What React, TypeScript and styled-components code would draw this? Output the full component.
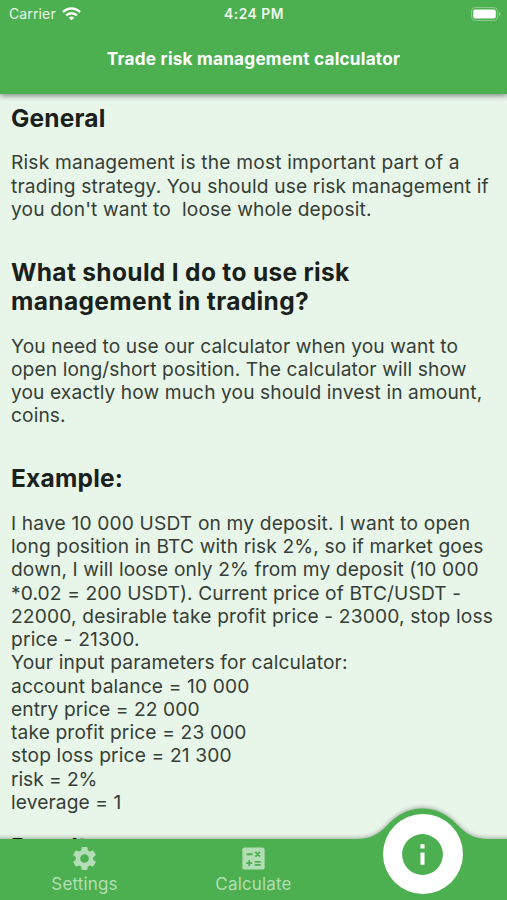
import React from "react";
import styled, { createGlobalStyle } from "styled-components";

const GREEN = "#4caf50";
const TINT = "#b3deb5";

const GlobalStyle = createGlobalStyle`
  * { box-sizing: border-box; }
  body { margin: 0; background: #e8f5e9; }
`;

const Screen = styled.div`
  width: 507px;
  height: 900px;
  overflow: hidden;
  display: flex;
  flex-direction: column;
  background: #e8f5e9;
  font-family: Inter, sans-serif;
`;

const Header = styled.header`
  position: relative;
  z-index: 1;
  flex: none;
  height: 94px;
  background: ${GREEN};
  color: #fff;
  box-shadow: 0 2px 5px rgba(0, 0, 0, 0.42);
`;

const StatusBar = styled.div`
  height: 27px;
  display: grid;
  grid-template-columns: 1fr auto 1fr;
  align-items: center;
  padding: 1px 6px 0 9px;
  font-size: 14px;
  line-height: 20px;
`;

const Carrier = styled.div`
  display: flex;
  align-items: center;
  gap: 6px;
  color: #e9f6e9;
  letter-spacing: 0.13px;
`;

const Clock = styled.div`
  font-weight: 600;
  font-size: 13.8px;
  color: #eff9ef;
  letter-spacing: 0.5px;
  margin-right: 2px;
`;

const BatterySlot = styled.div`
  display: flex;
  justify-content: flex-end;
`;

const Title = styled.h1`
  margin: 0;
  padding-top: 20px;
  text-align: center;
  font-size: 17.2px;
  line-height: 24px;
  font-weight: 700;
  letter-spacing: 0.22px;
`;

const Content = styled.main`
  flex: 1;
  min-height: 0;
  overflow: hidden;
  padding: 9.5px 11px 0;
`;

const Section = styled.section<{ $gap: number }>`
  margin-bottom: ${(p) => p.$gap}px;
`;

const Heading = styled.h2`
  margin: 0 0 18.5px;
  font-size: 24.5px;
  line-height: 29.3px;
  font-weight: 650;
  color: #1a211a;
  white-space: pre;
`;

const Text = styled.p`
  margin: 0;
  font-size: 19.2px;
  line-height: 23.25px;
  color: #363e37;
  white-space: pre;
`;

const Line = styled.span<{ $spacing: number }>`
  display: block;
  width: max-content;
  letter-spacing: ${(p) => p.$spacing}px;
`;

const NavBar = styled.nav`
  position: relative;
  z-index: 1;
  flex: none;
  height: 61px;
  display: grid;
  grid-template-columns: repeat(3, 1fr);
`;

const NavShape = styled.svg`
  position: absolute;
  left: 0;
  bottom: 0;
  overflow: visible;
  filter: drop-shadow(0 -1px 2px rgba(0, 0, 0, 0.3));
`;

const NavItem = styled.div`
  position: relative;
  display: flex;
  flex-direction: column;
  align-items: center;
  padding-top: 5px;
  color: ${TINT};
  font-size: 17px;
  line-height: 22px;
  letter-spacing: 0.16px;
`;

const ActiveButton = styled.div`
  position: absolute;
  left: 44.5px;
  top: -25px;
  width: 80px;
  height: 80px;
  border-radius: 50%;
  background: #fff;
  display: flex;
  align-items: center;
  justify-content: center;
`;

type Row = [text: string, spacing: number];

const sections: { title: Row[]; lines: Row[]; gap: number }[] = [
  {
    title: [["General", 0.17]],
    gap: 36.5,
    lines: [
      ["Risk management is the most important part of a", 0.18],
      ["trading strategy. You should use risk management if", 0.13],
      ["you don't want to  loose whole deposit.", 0.13],
    ],
  },
  {
    title: [
      ["What should I do to use risk", 0.33],
      ["management in trading?", 0.36],
    ],
    gap: 36.5,
    lines: [
      ["You need to use our calculator when you want to", 0.1],
      ["open long/short position. The calculator will show", 0.1],
      ["you exactly how much you should invest in amount,", 0.085],
      ["coins.", 0.1],
    ],
  },
  {
    title: [["Example:", 0.22]],
    gap: 19.2,
    lines: [
      ["I have 10 000 USDT on my deposit. I want to open", 0.15],
      ["long position in BTC with risk 2%, so if market goes", 0.13],
      ["down, I will loose only 2% from my deposit (10 000", 0.11],
      ["*0.02 = 200 USDT). Current price of BTC/USDT -", 0.11],
      ["22000, desirable take profit price - 23000, stop loss", 0.16],
      ["price - 21300.", 0.18],
      ["Your input parameters for calculator:", 0.13],
      ["account balance = 10 000", 0.13],
      ["entry price = 22 000", 0.07],
      ["take profit price = 23 000", 0.13],
      ["stop loss price = 21 300", 0.15],
      ["risk = 2%", -0.05],
      ["leverage = 1", 0.1],
    ],
  },
  { title: [["Result:", 0.2]], gap: 0, lines: [] },
];

const WifiIcon = () => (
  <svg width="19" height="14" viewBox="0 0 19 14" fill="none" stroke="#fff" strokeWidth="2.5">
    <path d="M1 5.2C5.8.4 13.2.4 18 5.2" />
    <path d="M4.1 8.3c3.1-2.9 7.7-2.9 10.8 0" />
    <path d="M6.7 10.5c1.7-1.4 3.9-1.4 5.6 0L9.5 13.4z" fill="#fff" stroke="none" />
  </svg>
);

const BatteryIcon = () => (
  <svg width="30" height="14" viewBox="0 0 30 14">
    <rect x=".5" y=".5" width="26" height="13" rx="3.8" fill="none" stroke="#fff" strokeOpacity=".35" />
    <rect x="2.2" y="2.4" width="22.6" height="9.2" rx="2" fill="#fff" />
    <path d="M28 4.8c1.7.7 1.7 3.7 0 4.4z" fill="#fff" fillOpacity=".5" />
  </svg>
);

const GearIcon = () => (
  <svg width="29" height="29" viewBox="0 0 24 24" fill="currentColor">
    <path d="M19.14 12.94c.04-.3.06-.61.06-.94 0-.32-.02-.64-.07-.94l2.03-1.58c.18-.14.23-.41.12-.61l-1.92-3.32c-.12-.22-.37-.29-.59-.22l-2.39.96c-.5-.38-1.03-.7-1.62-.94l-.36-2.54c-.04-.24-.24-.41-.48-.41h-3.84c-.24 0-.43.17-.47.41l-.36 2.54c-.59.24-1.13.57-1.62.94l-2.39-.96c-.22-.08-.47 0-.59.22L2.74 8.87c-.12.21-.08.47.12.61l2.03 1.58c-.05.3-.09.63-.09.94s.02.64.07.94l-2.03 1.58c-.18.14-.23.41-.12.61l1.92 3.32c.12.22.37.29.59.22l2.39-.96c.5.38 1.03.7 1.62.94l.36 2.54c.05.24.24.41.48.41h3.84c.24 0 .44-.17.47-.41l.36-2.54c.59-.24 1.13-.56 1.62-.94l2.39.96c.22.08.47 0 .59-.22l1.92-3.32c.12-.22.07-.47-.12-.61l-2.01-1.58zM12 15.6A3.6 3.6 0 1 1 12 8.4a3.6 3.6 0 0 1 0 7.2z" />
  </svg>
);

const CalculateIcon = () => (
  <svg width="29" height="29" viewBox="0 0 24 24">
    <rect x="2.8" y="2.8" width="18.4" height="18.4" rx="1.6" fill="currentColor" />
    <g stroke={GREEN} strokeWidth="1.5" fill="none">
      <path d="M6.25 8.47h5M13.5 6.55l3.9 3.9M17.4 6.55l-3.9 3.9M6 15.75h5M8.5 13.25v5M13 14.75h5M13 17.25h5" />
    </g>
  </svg>
);

const InfoIcon = () => (
  <svg width="49" height="49" viewBox="0 0 24 24">
    <circle cx="12" cy="12" r="10" fill={GREEN} />
    <path d="M11 7h2v2h-2zM11 11h2v6h-2z" fill="#fff" />
  </svg>
);

const Lines = ({ rows }: { rows: Row[] }) => (
  <>
    {rows.map(([text, spacing]) => (
      <Line key={text} $spacing={spacing}>
        {text}
      </Line>
    ))}
  </>
);

export default function App() {
  return (
    <>
      <GlobalStyle />
      <Screen>
        <Header>
          <StatusBar>
            <Carrier>
              Carrier
              <WifiIcon />
            </Carrier>
            <Clock>4:24 PM</Clock>
            <BatterySlot>
              <BatteryIcon />
            </BatterySlot>
          </StatusBar>
          <Title>Trade risk management calculator</Title>
        </Header>
        <Content>
          {sections.map((s) => (
            <Section key={s.title[0][0]} $gap={s.gap}>
              <Heading>
                <Lines rows={s.title} />
              </Heading>
              <Text>
                <Lines rows={s.lines} />
              </Text>
            </Section>
          ))}
        </Content>
        <NavBar>
          <NavShape width="507" height="61" viewBox="0 0 507 61">
            <path
              d="M-8 0H357C371 0 379-5 388-14.5C397-24 408-30.5 422.5-30.5S448-24 457-14.5C466-5 474 0 488 0H515V70H-8Z"
              fill={GREEN}
            />
          </NavShape>
          <NavItem>
            <GearIcon />
            Settings
          </NavItem>
          <NavItem>
            <CalculateIcon />
            Calculate
          </NavItem>
          <NavItem>
            <ActiveButton>
              <InfoIcon />
            </ActiveButton>
          </NavItem>
        </NavBar>
      </Screen>
    </>
  );
}
